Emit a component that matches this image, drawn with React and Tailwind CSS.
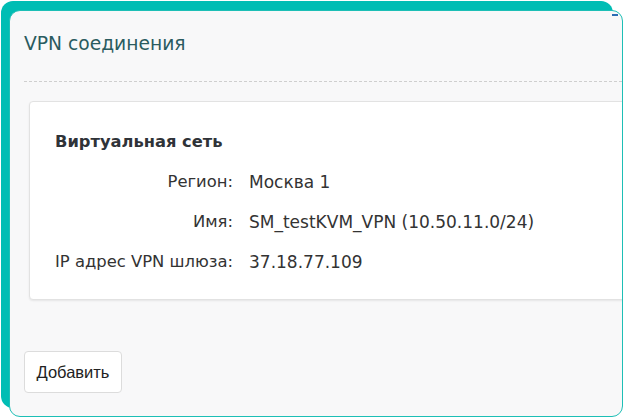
import React from 'react';

const ROWS = [
  ['Регион:', 'Москва 1'],
  ['Имя:', 'SM_testKVM_VPN (10.50.11.0/24)'],
  ['IP адрес VPN шлюза:', '37.18.77.109'],
];

export default function App() {
  return (
    <div className="relative w-[624px] h-[417px] bg-white overflow-hidden font-['DejaVu_Sans',sans-serif]">
      {/* teal backdrop */}
      <div className="absolute left-[1px] top-[1px] w-[612px] h-[407px] rounded-[12px] bg-[#00bdb4]" />

      {/* panel */}
      <div className="relative ml-[9px] mt-[10px] w-[614px] h-[407px] rounded-[11px] border border-[#1dbfb6] bg-[#f8f8f9] overflow-hidden">
        <div className="absolute right-[4px] top-[3px] w-[6px] h-[2px] bg-[#2b6cb3]" />

        <div className="pl-[14px]">
          <h1 className="pt-[20px] h-[70px] text-[18.7px] leading-[26px] text-[#2a5b5f]">VPN соединения</h1>
          <div className="border-t border-dashed border-[#cfcfcf]" />

          <div className="mt-[19px] ml-[5px] w-[640px] h-[199px] rounded-[4px] border border-[#e2e2e2] bg-white shadow-[0_1px_2px_rgba(0,0,0,0.08)] pl-[25px] pt-[29px]">
            <p className="text-[16.3px] leading-[22px] font-bold text-[#2f3338]">Виртуальная сеть</p>
            <div className="mt-[18px] grid grid-cols-[178px_1fr] gap-x-[16px] gap-y-[18px] leading-[22px] text-[#333]">
              {ROWS.map(([label, value]) => (
                <React.Fragment key={label}>
                  <span className="text-right text-[16.4px] whitespace-nowrap">{label}</span>
                  <span className="text-[17px] whitespace-nowrap">{value}</span>
                </React.Fragment>
              ))}
            </div>
          </div>

          <button className="mt-[51px] w-[98px] h-[42px] rounded-[4px] border border-[#dcdcdc] bg-white font-['Liberation_Sans',sans-serif] text-[16.5px] text-[#222]">
            Добавить
          </button>
        </div>
      </div>
    </div>
  );
}
